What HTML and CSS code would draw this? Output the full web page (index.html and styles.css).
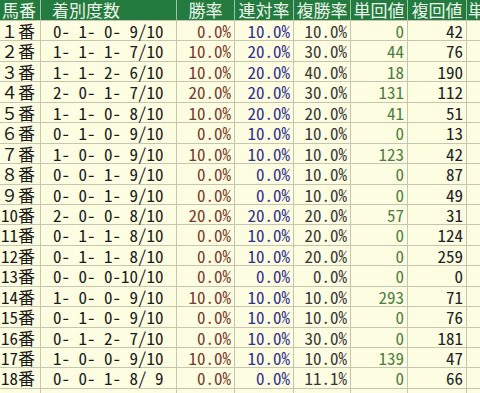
FILE: index.html
```html
<!DOCTYPE html>
<html lang="ja">
<head>
<meta charset="utf-8">
<link rel="stylesheet" href="styles.css">
</head>
<body>
<div class="sheet">
  <div class="row head">
    <div class="c c1 hl">馬番</div>
    <div class="c c2 hl">着別度数</div>
    <div class="c">勝率</div>
    <div class="c">連対率</div>
    <div class="c">複勝率</div>
    <div class="c">単回値</div>
    <div class="c">複回値</div>
    <div class="c hl">単回</div>
  </div>
  <div class="row"><div class="c c1">１番</div><div class="c c2">0- 1- 0- 9/10</div><div class="c win">0.0%</div><div class="c ren">10.0%</div><div class="c fuku">10.0%</div><div class="c tan">0</div><div class="c fk">42</div><div class="c"></div></div>
  <div class="row"><div class="c c1">２番</div><div class="c c2">1- 1- 1- 7/10</div><div class="c win">10.0%</div><div class="c ren">20.0%</div><div class="c fuku">30.0%</div><div class="c tan">44</div><div class="c fk">76</div><div class="c"></div></div>
  <div class="row"><div class="c c1">３番</div><div class="c c2">1- 1- 2- 6/10</div><div class="c win">10.0%</div><div class="c ren">20.0%</div><div class="c fuku">40.0%</div><div class="c tan">18</div><div class="c fk">190</div><div class="c"></div></div>
  <div class="row"><div class="c c1">４番</div><div class="c c2">2- 0- 1- 7/10</div><div class="c win">20.0%</div><div class="c ren">20.0%</div><div class="c fuku">30.0%</div><div class="c tan">131</div><div class="c fk">112</div><div class="c"></div></div>
  <div class="row"><div class="c c1">５番</div><div class="c c2">1- 1- 0- 8/10</div><div class="c win">10.0%</div><div class="c ren">20.0%</div><div class="c fuku">20.0%</div><div class="c tan">41</div><div class="c fk">51</div><div class="c"></div></div>
  <div class="row"><div class="c c1">６番</div><div class="c c2">0- 1- 0- 9/10</div><div class="c win">0.0%</div><div class="c ren">10.0%</div><div class="c fuku">10.0%</div><div class="c tan">0</div><div class="c fk">13</div><div class="c"></div></div>
  <div class="row"><div class="c c1">７番</div><div class="c c2">1- 0- 0- 9/10</div><div class="c win">10.0%</div><div class="c ren">10.0%</div><div class="c fuku">10.0%</div><div class="c tan">123</div><div class="c fk">42</div><div class="c"></div></div>
  <div class="row"><div class="c c1">８番</div><div class="c c2">0- 0- 1- 9/10</div><div class="c win">0.0%</div><div class="c ren">0.0%</div><div class="c fuku">10.0%</div><div class="c tan">0</div><div class="c fk">87</div><div class="c"></div></div>
  <div class="row"><div class="c c1">９番</div><div class="c c2">0- 0- 1- 9/10</div><div class="c win">0.0%</div><div class="c ren">0.0%</div><div class="c fuku">10.0%</div><div class="c tan">0</div><div class="c fk">49</div><div class="c"></div></div>
  <div class="row"><div class="c c1"><span class="hw">10</span>番</div><div class="c c2">2- 0- 0- 8/10</div><div class="c win">20.0%</div><div class="c ren">20.0%</div><div class="c fuku">20.0%</div><div class="c tan">57</div><div class="c fk">31</div><div class="c"></div></div>
  <div class="row"><div class="c c1"><span class="hw">11</span>番</div><div class="c c2">0- 1- 1- 8/10</div><div class="c win">0.0%</div><div class="c ren">10.0%</div><div class="c fuku">20.0%</div><div class="c tan">0</div><div class="c fk">124</div><div class="c"></div></div>
  <div class="row"><div class="c c1"><span class="hw">12</span>番</div><div class="c c2">0- 1- 1- 8/10</div><div class="c win">0.0%</div><div class="c ren">10.0%</div><div class="c fuku">20.0%</div><div class="c tan">0</div><div class="c fk">259</div><div class="c"></div></div>
  <div class="row"><div class="c c1"><span class="hw">13</span>番</div><div class="c c2">0- 0- 0-10/10</div><div class="c win">0.0%</div><div class="c ren">0.0%</div><div class="c fuku">0.0%</div><div class="c tan">0</div><div class="c fk">0</div><div class="c"></div></div>
  <div class="row"><div class="c c1"><span class="hw">14</span>番</div><div class="c c2">1- 0- 0- 9/10</div><div class="c win">10.0%</div><div class="c ren">10.0%</div><div class="c fuku">10.0%</div><div class="c tan">293</div><div class="c fk">71</div><div class="c"></div></div>
  <div class="row"><div class="c c1"><span class="hw">15</span>番</div><div class="c c2">0- 1- 0- 9/10</div><div class="c win">0.0%</div><div class="c ren">10.0%</div><div class="c fuku">10.0%</div><div class="c tan">0</div><div class="c fk">76</div><div class="c"></div></div>
  <div class="row"><div class="c c1"><span class="hw">16</span>番</div><div class="c c2">0- 1- 2- 7/10</div><div class="c win">0.0%</div><div class="c ren">10.0%</div><div class="c fuku">30.0%</div><div class="c tan">0</div><div class="c fk">181</div><div class="c"></div></div>
  <div class="row"><div class="c c1"><span class="hw">17</span>番</div><div class="c c2">1- 0- 0- 9/10</div><div class="c win">10.0%</div><div class="c ren">10.0%</div><div class="c fuku">10.0%</div><div class="c tan">139</div><div class="c fk">47</div><div class="c"></div></div>
  <div class="row"><div class="c c1"><span class="hw">18</span>番</div><div class="c c2">0- 0- 1- 8/ 9</div><div class="c win">0.0%</div><div class="c ren">0.0%</div><div class="c fuku">11.1%</div><div class="c tan">0</div><div class="c fk">66</div><div class="c"></div></div>
  <div class="row"><div class="c c1"></div><div class="c c2"></div><div class="c"></div><div class="c"></div><div class="c"></div><div class="c"></div><div class="c"></div><div class="c"></div></div>
</div>
</body>
</html>
```
FILE: styles.css
```css
html, body {
  margin: 0;
  padding: 0;
  background: #fdfde2;
  overflow: hidden;
}
.sheet {
  width: 520px;
  font-family: "Noto Sans CJK JP", sans-serif;
  font-size: 17px;
  font-feature-settings: "hwid" 1;
  color: #1a1a1a;
}
.row {
  display: grid;
  grid-template-columns: 41px 136px 58px 59px 57px 57px 59px 94px;
  height: 20.45px;
  line-height: 19px;
}
.c {
  box-sizing: border-box;
  border-right: 1px solid #c6c6b0;
  border-bottom: 1px solid #c6c6b0;
  padding: 0 3px 0 2px;
  text-align: right;
  white-space: pre;
}
.c1 {
  text-align: left;
  padding-left: 1px;
  font-feature-settings: normal;
}
.c1 .hw {
  font-feature-settings: "hwid" 1;
}
.c2 {
  text-align: left;
  padding-left: 12px;
}
.row.head {
  height: 21px;
  line-height: 20px;
  background: #237b40;
  color: #eef6ea;
}
.head .c {
  text-align: center;
  border-right-color: #9cc4a4;
  border-bottom-color: #c6c6b0;
  padding: 0;
}
.head .c1 {
  text-align: left;
  padding-left: 2px;
}
.head .c2 {
  text-align: left;
  padding-left: 11px;
}
.head .hl:last-child {
  text-align: left;
  padding-left: 1px;
  overflow: hidden;
}
.win { color: #7a3b2c; }
.ren { color: #30308e; }
.fuku { color: #383838; }
.tan { color: #4d8040; }
.fk { color: #222; }
```
